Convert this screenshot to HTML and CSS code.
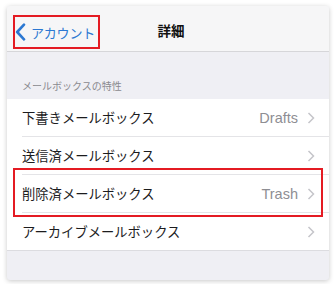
FILE: index.html
```html
<!DOCTYPE html>
<html>
<head>
    <meta charset="UTF-8">
    <meta name="viewport" content="width=device-width, initial-scale=1.0">
    <title>詳細</title>
    <link rel="stylesheet" href="styles.css">
</head>
<body>
    <div class="screen">
        <div class="nav-bar">
            <div class="back-button">
                <svg class="back-chevron" width="11" height="18" viewBox="0 0 11 18">
                    <path d="M9 1.6 L2.2 9 L9 16.4" fill="none" stroke="#2c78d2" stroke-width="2.6" stroke-linecap="round" stroke-linejoin="round"/>
                </svg>
                <span class="back-label">アカウント</span>
            </div>
            <div class="nav-title">詳細</div>
            <div></div>
        </div>

        <div class="section-header">メールボックスの特性</div>
        <ul class="mailbox-list">
            <li class="mailbox-item">
                <div class="mailbox-body">
                    <span class="mailbox-name">下書きメールボックス</span>
                    <span class="mailbox-value">Drafts</span>
                    <svg class="chevron" width="8" height="12" viewBox="0 0 8 12"><path d="M1.5 1 L6.5 6 L1.5 11" fill="none" stroke="#c5c5ca" stroke-width="1.5"/></svg>
                </div>
            </li>
            <li class="mailbox-item">
                <div class="mailbox-body">
                    <span class="mailbox-name">送信済メールボックス</span>
                    <span class="mailbox-value"></span>
                    <svg class="chevron" width="8" height="12" viewBox="0 0 8 12"><path d="M1.5 1 L6.5 6 L1.5 11" fill="none" stroke="#c5c5ca" stroke-width="1.5"/></svg>
                </div>
            </li>
            <li class="mailbox-item highlighted">
                <div class="mailbox-body">
                    <span class="mailbox-name">削除済メールボックス</span>
                    <span class="mailbox-value">Trash</span>
                    <svg class="chevron" width="8" height="12" viewBox="0 0 8 12"><path d="M1.5 1 L6.5 6 L1.5 11" fill="none" stroke="#c5c5ca" stroke-width="1.5"/></svg>
                </div>
            </li>
            <li class="mailbox-item">
                <div class="mailbox-body">
                    <span class="mailbox-name">アーカイブメールボックス</span>
                    <span class="mailbox-value"></span>
                    <svg class="chevron" width="8" height="12" viewBox="0 0 8 12"><path d="M1.5 1 L6.5 6 L1.5 11" fill="none" stroke="#c5c5ca" stroke-width="1.5"/></svg>
                </div>
            </li>
        </ul>
    </div>
</body>
</html>
```

FILE: styles.css
```css
        body {
            margin: 0;
            background: white;
            font-family: "Liberation Sans", "Noto Sans CJK JP", sans-serif;
        }

        .screen {
            margin: 6px 7px;
            height: 274px;
            background: #efeff4;
            border-radius: 3px;
            box-shadow: 0 1px 5px rgba(0, 0, 0, 0.22);
            overflow: hidden;
        }

        .nav-bar {
            height: 46px;
            box-sizing: border-box;
            padding: 9px 0 0 6px;
            background: #f6f6f7;
            border-bottom: 1px solid #d6d6d9;
            display: grid;
            grid-template-columns: 1fr auto 1fr;
            align-items: start;
        }

        .back-button {
            width: 87px;
            height: 34px;
            box-sizing: border-box;
            border: 2px solid #e41b23;
            display: flex;
            align-items: center;
            gap: 5px;
        }

        .back-chevron {
            flex-shrink: 0;
        }

        .back-label {
            color: #2c78d2;
            font-size: 13px;
            letter-spacing: -0.2px;
        }

        .nav-title {
            font-size: 13.5px;
            font-weight: bold;
            color: #111;
            line-height: 34px;
        }

        .section-header {
            padding: 28px 15px 5px;
            font-size: 10px;
            line-height: 14px;
            color: #8a8a8f;
        }

        .mailbox-list {
            list-style: none;
            margin: 0;
            padding: 0;
            background: white;
            border-bottom: 1px solid #dcdce0;
        }

        .mailbox-item {
            padding-left: 15px;
            position: relative;
        }

        .mailbox-body {
            height: 37px;
            display: flex;
            align-items: center;
            padding-right: 14px;
            border-bottom: 1px solid #e4e4e7;
        }

        .mailbox-item:last-child .mailbox-body {
            border-bottom: none;
        }

        .mailbox-name {
            flex: 1;
            font-size: 13.3px;
            color: #1c1c1e;
        }

        .mailbox-value {
            font-size: 14.5px;
            color: #8e8e93;
            margin-right: 9px;
        }

        .highlighted::after {
            content: '';
            position: absolute;
            top: -7px;
            bottom: -4px;
            left: 6px;
            right: 6px;
            border: 2px solid #e41b23;
        }
```
